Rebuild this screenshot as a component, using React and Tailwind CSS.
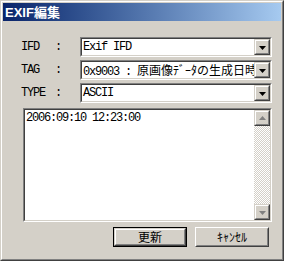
const mono = "font-['Liberation_Mono','Noto_Sans_CJK_JP',monospace] text-[12px] tracking-[-1.2px]";
const cjk = "font-['Noto_Sans_CJK_JP',sans-serif] tracking-normal";

const Raised = ({ className = '', children }) => (
  <div className={`border border-t-[#d4d0c8] border-l-[#d4d0c8] border-b-[#404040] border-r-[#404040] ${className}`}>
    <div className="flex h-full w-full items-center justify-center border border-t-white border-l-white border-b-[#808080] border-r-[#808080] bg-[#d4d0c8]">
      {children}
    </div>
  </div>
);

const Sunken = ({ className = '', children }) => (
  <div className={`border border-t-[#808080] border-l-[#808080] border-b-white border-r-white ${className}`}>
    <div className="flex h-full w-full border border-t-[#404040] border-l-[#404040] border-b-[#d4d0c8] border-r-[#d4d0c8] bg-white">
      {children}
    </div>
  </div>
);

const Arrow = ({ up = false, color = '#000' }) => (
  <svg width="7" height="4" viewBox="0 0 7 4" className={up ? 'mb-px' : 'mt-px'}>
    <polygon points={up ? '3.5,0 7,4 0,4' : '0,0 7,0 3.5,4'} fill={color} />
  </svg>
);

const Combo = ({ children }) => (
  <Sunken className="h-5 w-[192px]">
    <div className={`flex-1 overflow-hidden whitespace-nowrap pl-[1px] leading-4 text-black ${mono}`}>
      {children}
    </div>
    <Raised className="h-4 w-4 shrink-0">
      <Arrow />
    </Raised>
  </Sunken>
);

const Row = ({ label, children }) => (
  <div className={`flex h-5 items-center text-black ${mono}`}>
    <span className="w-[34px]">{label}</span>
    <span className="w-[25px]">:</span>
    <Combo>{children}</Combo>
  </div>
);

export default function App() {
  return (
    <div className="h-[261px] w-[284px] border border-t-[#d4d0c8] border-l-[#d4d0c8] border-b-[#404040] border-r-[#404040] bg-[#d4d0c8]">
      <div className="flex h-full flex-col border border-t-white border-l-white border-b-[#808080] border-r-[#808080] p-px">
        {/* Title bar */}
        <div className="flex h-[18px] items-center bg-gradient-to-r from-[#0a246a] to-[#a6caf0] pl-[2px]">
          <span className="font-['Liberation_Sans','Noto_Sans_CJK_JP',sans-serif] text-[13px] font-bold leading-none text-white">
            EXIF編集
          </span>
        </div>

        {/* Fields */}
        <div className="flex flex-col gap-[3px] pl-[18px] pt-4">
          <Row label="IFD">Exif IFD</Row>
          <Row label="TAG">
            0x9003 : <span className={cjk}>原画像ﾃﾞｰﾀの生成日時</span>
          </Row>
          <Row label="TYPE">ASCII</Row>
        </div>

        {/* Value text area */}
        <div className="pl-5 pt-[5px]">
          <Sunken className="h-[114px] w-[249px]">
            <div className={`flex-1 pl-px pt-[1px] leading-[14px] text-black ${mono}`}>
              2006:09:10 12:23:00
            </div>
            <div className="flex w-4 flex-col">
              <Raised className="h-4 w-4 shrink-0">
                <Arrow up color="#808080" />
              </Raised>
              <div className="flex-1 bg-[repeating-conic-gradient(#d4d0c8_0_25%,#ffffff_0_50%)] bg-[length:2px_2px]" />
              <Raised className="h-4 w-4 shrink-0">
                <Arrow color="#808080" />
              </Raised>
            </div>
          </Sunken>
        </div>

        {/* Buttons */}
        <div className="flex gap-2 pl-[110px] pt-[5px] font-['Noto_Sans_CJK_JP',sans-serif] text-[12px] text-black">
          <div className="h-5 w-[74px] border border-black">
            <Raised className="h-full w-full">
              <span className="leading-none">更新</span>
            </Raised>
          </div>
          <div className="h-5 w-[74px] border border-t-white border-l-white border-b-[#404040] border-r-[#404040]">
            <div className="flex h-full w-full items-center justify-center border border-t-[#d4d0c8] border-l-[#d4d0c8] border-b-[#808080] border-r-[#808080]">
              <span className="leading-none">ｷｬﾝｾﾙ</span>
            </div>
          </div>
        </div>
      </div>
    </div>
  );
}
